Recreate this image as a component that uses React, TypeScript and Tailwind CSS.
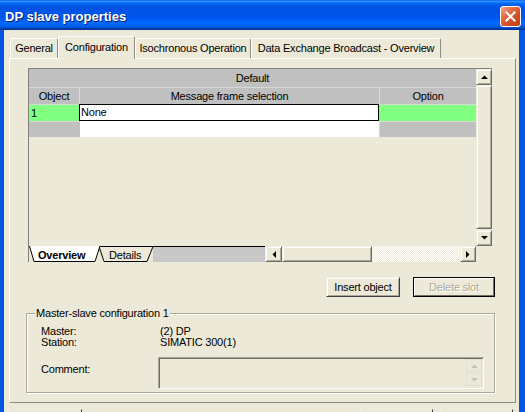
import React from 'react';

// DP slave properties dialog (XP look)

const ui = "font-['Liberation_Sans',Arial,sans-serif] text-[11px] tracking-[-0.2px] text-black";

function Arrow({ dir, color = '#000' }: { dir: 'up' | 'down' | 'left' | 'right'; color?: string }) {
  const vertical = dir === 'up' || dir === 'down';
  const pts = {
    up: '0,4 3.5,0.5 7,4',
    down: '0,0 3.5,3.5 7,0',
    left: '4,0 0.5,3.5 4,7',
    right: '0,0 3.5,3.5 0,7',
  }[dir];
  return (
    <svg width={vertical ? 7 : 4} height={vertical ? 4 : 7} className="block">
      <polygon points={pts} fill={color} />
    </svg>
  );
}

function ScrollBtn({ dir, className = '' }: { dir: 'up' | 'down' | 'left' | 'right'; className?: string }) {
  return (
    <div
      className={`flex items-center justify-center bg-[#ece9d8] border border-t-[#f1efe2] border-l-[#f1efe2] border-r-[#716f64] border-b-[#716f64] shadow-[inset_1px_1px_0_#fff,inset_-1px_-1px_0_#aca899] ${className}`}
    >
      <Arrow dir={dir} />
    </div>
  );
}

function TitleBar() {
  return (
    <div className="h-[30px] shrink-0 flex items-center justify-between pl-[5px] pr-[4px] bg-[linear-gradient(180deg,#0058ee_0%,#3593ff_4%,#288eff_6%,#127dff_8%,#036ffc_10%,#0262ee_14%,#0057e5_20%,#0054e3_24%,#0055eb_56%,#005bf5_66%,#026afe_76%,#0062ef_86%,#0052d6_92%,#0040ab_94%,#003092_100%)]">
      <span className="font-['Liberation_Sans',Arial,sans-serif] text-[13px] font-bold tracking-normal text-white [text-shadow:1px_1px_0_#0a1e6e] pt-[3px]">
        DP slave properties
      </span>
      <div className="w-[21px] h-[21px] mt-[2px] rounded-[3px] border border-white flex items-center justify-center bg-[linear-gradient(135deg,#f3a58a_0%,#e26a45_35%,#d1481f_70%,#c2401c_100%)]">
        <svg width="11" height="11" viewBox="0 0 11 11">
          <path d="M1.5 1.5 L9.5 9.5 M9.5 1.5 L1.5 9.5" stroke="#fff" strokeWidth="2" strokeLinecap="square" />
        </svg>
      </div>
    </div>
  );
}

function Tabs() {
  const tab = 'flex items-center justify-center h-[20px] border-t border-l border-r border-t-white border-l-white border-r-[#8f8d80] rounded-t-[2px] bg-[#ece9d8]';
  return (
    <div className="flex items-end h-[22px] ml-[1px] shrink-0">
      <div className={`${tab} w-[48px]`}>General</div>
      <div className={`${tab} w-[77px] h-[23px] -mb-px relative z-10 pb-[2px]`}>Configuration</div>
      <div className={`${tab} w-[116px]`}>Isochronous Operation</div>
      <div className={`${tab} w-[190px]`}>Data Exchange Broadcast - Overview</div>
    </div>
  );
}

function SheetTabs() {
  return (
    <div className="relative w-[236px] h-[16px]">
      <svg width="236" height="16" className="absolute inset-0">
        <rect x="124" y="0" width="112" height="16" fill="#c8c8c8" />
        <line x1="70" y1="0.5" x2="236" y2="0.5" stroke="#000" />
        <polygon points="70,0.5 75,15.5 118,15.5 124,0.5" fill="#ece9d8" stroke="#000" />
        <polygon points="0,0 5,15.5 66,15.5 71,0" fill="#fff" />
        <polyline points="0.5,0 5,15.5 66,15.5 71,0" fill="none" stroke="#000" />
      </svg>
      <span className="absolute left-[9px] top-[1px] font-bold">Overview</span>
      <span className="absolute left-[80px] top-[1px]">Details</span>
    </div>
  );
}

function Grid() {
  const hd = 'flex items-center justify-center bg-[#c0c0c0] border-l border-l-[#dcdcdc]';
  return (
    <div className="ml-[18px] mt-[9px] w-[464px] border-t border-l border-t-[#808080] border-l-[#808080] flex flex-col">
      <div className="flex h-[177px]">
        <div className="w-[447px] flex flex-col bg-[#ece9d8]">
          <div className="h-[19px] flex items-center justify-center bg-[#c0c0c0] border-b border-b-[#d8d8d8]">Default</div>
          <div className="flex h-[16px]">
            <div className={`${hd} w-[50px] border-l-0`}>Object</div>
            <div className={`${hd} w-[300px]`}>Message frame selection</div>
            <div className={`${hd} w-[97px]`}>Option</div>
          </div>
          <div className="flex h-[17px]">
            <div className="w-[50px] bg-[#80ff80] pl-[2px] flex items-center border-t border-t-[#d8d8d8]">1</div>
            <div className="w-[300px] bg-white border border-black flex items-center pl-[1px]">None</div>
            <div className="w-[97px] bg-[#80ff80] border-t border-t-[#d8d8d8]" />
          </div>
          <div className="flex h-[16px]">
            <div className="w-[50px] bg-[#c0c0c0] border-t border-t-[#d8d8d8]" />
            <div className="w-[300px] bg-white border-l border-l-[#c0c0c0]" />
            <div className="w-[97px] bg-[#c0c0c0] border-t border-t-[#d8d8d8] border-l border-l-[#d8d8d8]" />
          </div>
        </div>
        <div className="w-[16px] flex flex-col">
          <ScrollBtn dir="up" className="h-[16px]" />
          <div className="h-[144px] bg-[#ece9d8] border border-t-[#f1efe2] border-l-[#f1efe2] border-r-[#716f64] border-b-[#716f64] shadow-[inset_1px_1px_0_#fff,inset_-1px_-1px_0_#aca899]" />
          <ScrollBtn dir="down" className="h-[16px] mt-px" />
        </div>
      </div>
      <div className="flex h-[16px]">
        <SheetTabs />
        <ScrollBtn dir="left" className="w-[17px]" />
        <div className="w-[90px] bg-[#ece9d8] border border-t-[#f1efe2] border-l-[#f1efe2] border-r-[#716f64] border-b-[#716f64] shadow-[inset_1px_1px_0_#fff,inset_-1px_-1px_0_#aca899]" />
        <div className="w-[88px] bg-[repeating-conic-gradient(#ece9d8_0_25%,#fff_0_50%)] bg-[length:2px_2px]" />
        <ScrollBtn dir="right" className="w-[16px]" />
        <div className="w-[16px] bg-[#ece9d8]" />
      </div>
    </div>
  );
}

function Button({ children, disabled, className = '' }: { children: React.ReactNode; disabled?: boolean; className?: string }) {
  if (disabled) {
    return (
      <div className={`h-[20px] border border-black flex ${className}`}>
        <div className="flex-1 flex items-center justify-center bg-[#ece9d8] border border-t-white border-l-white border-r-[#716f64] border-b-[#716f64] text-[#aca899] [text-shadow:1px_1px_0_#fff]">
          {children}
        </div>
      </div>
    );
  }
  return (
    <div className={`h-[20px] flex items-center justify-center bg-[#ece9d8] border border-t-[#f1efe2] border-l-[#f1efe2] border-r-[#404040] border-b-[#404040] shadow-[inset_1px_1px_0_#fff,inset_-1px_-1px_0_#aca899] ${className}`}>
      {children}
    </div>
  );
}

function GroupBox() {
  return (
    <div className="relative ml-[16px] mt-[16px] w-[469px] h-[80px] border border-[#aca899] shadow-[inset_1px_1px_0_#fff,1px_1px_0_#fff]">
      <span className="absolute left-[8px] -top-[7px] px-[1px] bg-[#ece9d8] leading-[12px]">Master-slave configuration 1</span>
      <div className="pl-[14px] pt-[12px] flex flex-col leading-[10.5px]">
        <div className="flex">
          <span className="w-[119px]">Master:</span>
          <span>(2) DP</span>
        </div>
        <div className="flex">
          <span className="w-[119px]">Station:</span>
          <span>SIMATIC 300(1)</span>
        </div>
        <div className="flex mt-[10px]">
          <span className="w-[117px] pt-[7px]">Comment:</span>
          <div className="w-[326px] h-[32px] border border-t-[#aca899] border-l-[#aca899] border-r-white border-b-white shadow-[inset_1px_1px_0_#716f64] bg-[#ece9d8] flex justify-end pt-[1px] pr-[1px]">
            <div className="w-[16px] flex flex-col gap-px">
              <div className="h-[13px] flex items-center justify-center border border-[#e0dfd4] bg-[#ece9d8]">
                <Arrow dir="up" color="#c4c2b8" />
              </div>
              <div className="h-[13px] flex items-center justify-center border border-[#e0dfd4] bg-[#ece9d8]">
                <Arrow dir="down" color="#c4c2b8" />
              </div>
            </div>
          </div>
        </div>
      </div>
    </div>
  );
}

export default function App() {
  return (
    <div className={`${ui} w-[525px] h-[412px] overflow-hidden flex flex-col bg-[#0055e5]`}>
      <TitleBar />
      <div className="flex-1 min-h-0 overflow-hidden ml-[4px] mr-[6px] bg-[#ece9d8] flex flex-col pt-[6px] pl-[5px]">
        <Tabs />
        <div className="w-[507px] h-[345px] shrink-0 border border-t-white border-l-white border-r-[#8f8d80] border-b-[#8f8d80] bg-[#ece9d8] flex flex-col">
          <Grid />
          <div className="flex mt-[15px]">
            <Button className="ml-[316px] w-[74px]">Insert object</Button>
            <Button disabled className="ml-[13px] w-[82px]">Delete slot</Button>
          </div>
          <GroupBox />
        </div>
        <div className="flex shrink-0 mt-[6px] -ml-px">
          <div className="w-[74px] h-[10px] border-t border-l border-r border-t-[#f1efe2] border-l-[#f1efe2] border-r-[#404040]" />
          <div className="ml-[278px] w-[73px] h-[10px] border-t border-l border-r border-t-[#f1efe2] border-l-[#f1efe2] border-r-[#404040]" />
          <div className="ml-[7px] w-[73px] h-[10px] border-t border-l border-r border-t-[#f1efe2] border-l-[#f1efe2] border-r-[#404040]" />
        </div>
      </div>
    </div>
  );
}
